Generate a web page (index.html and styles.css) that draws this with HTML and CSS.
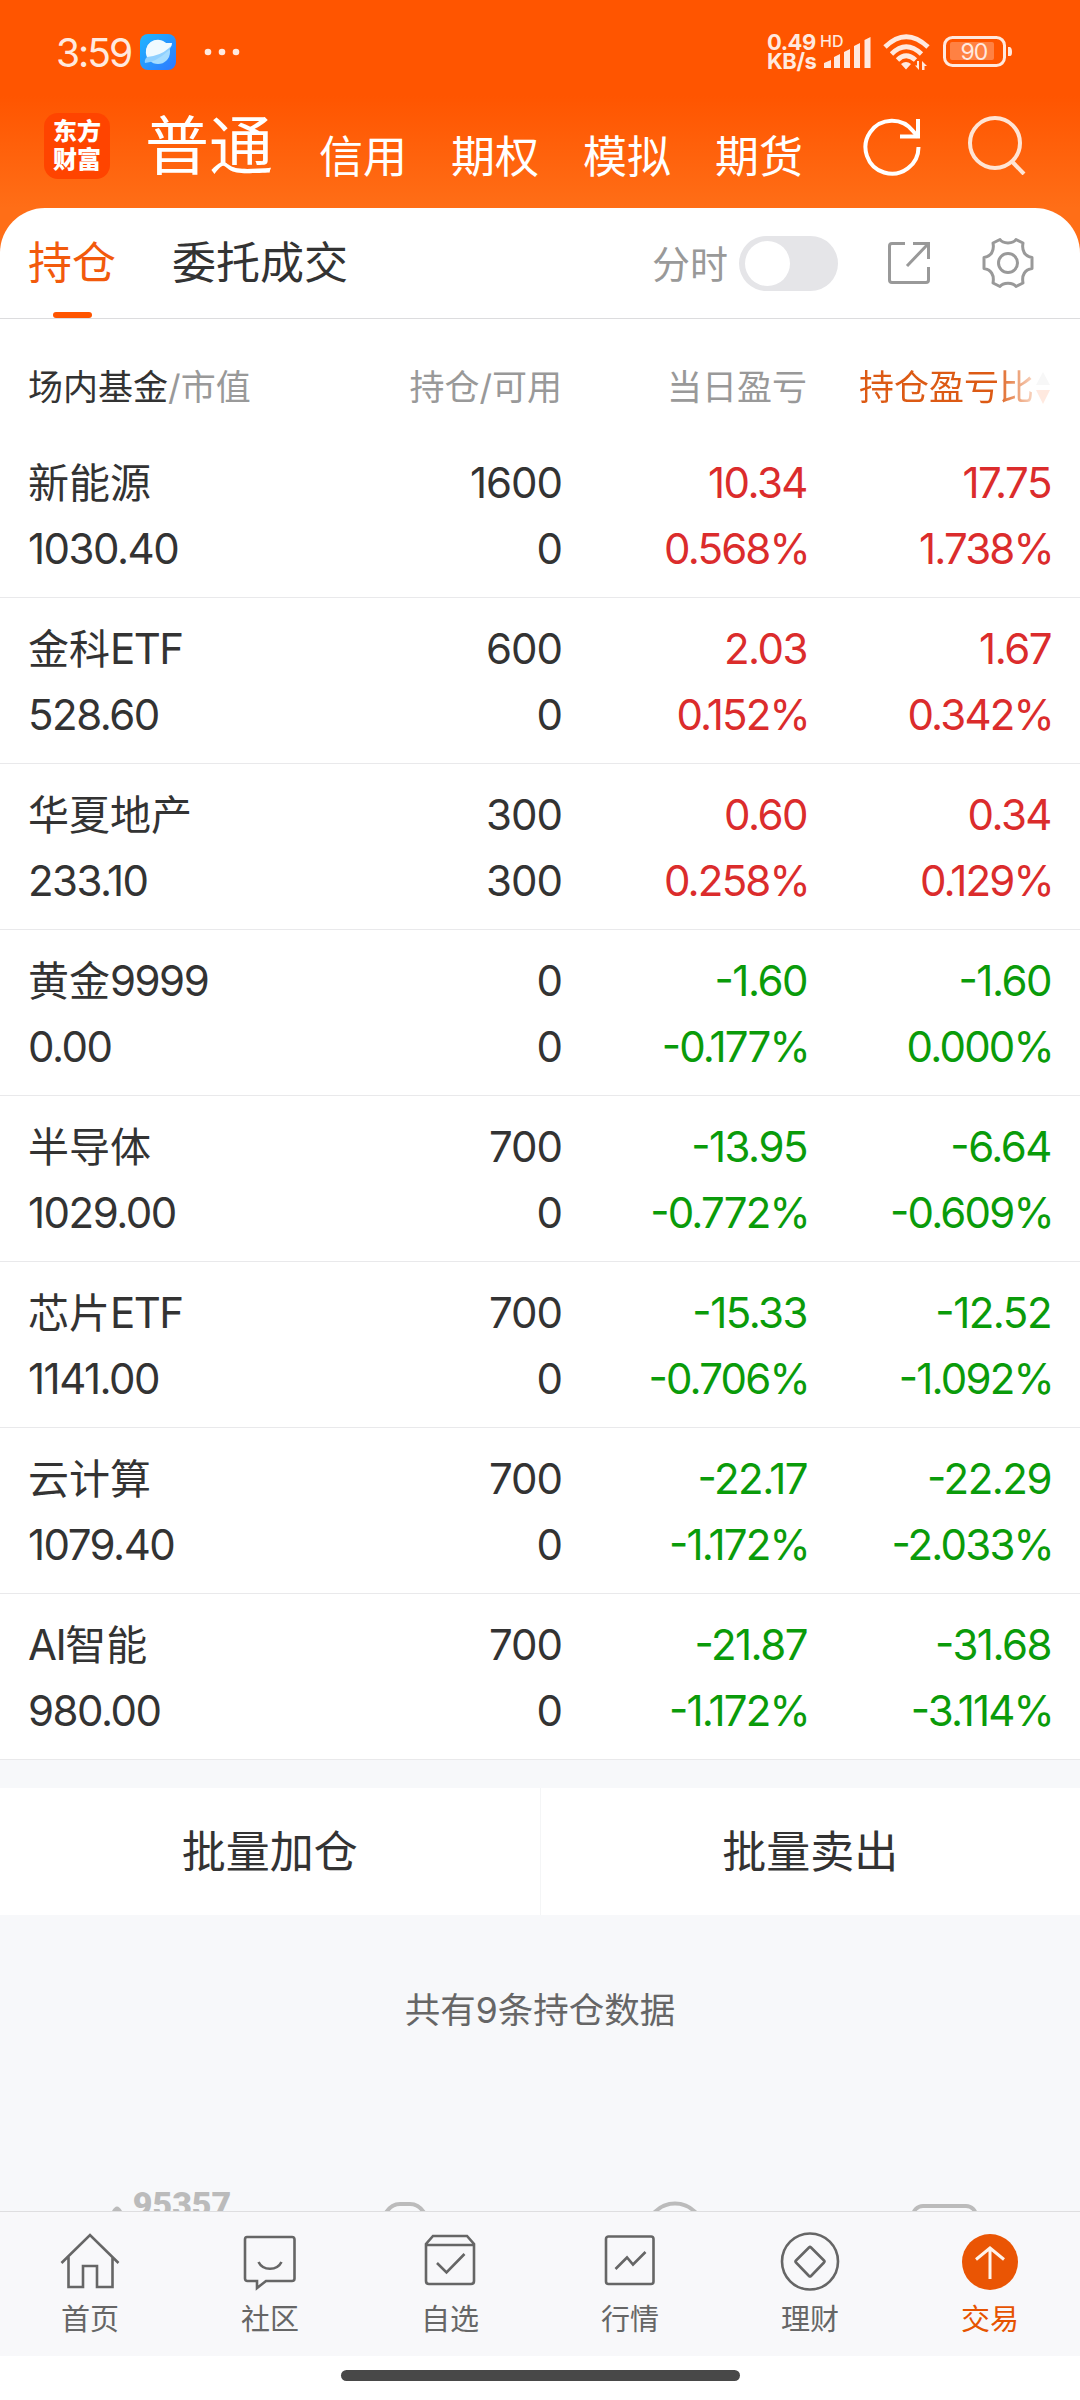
FILE: index.html
```html
<!DOCTYPE html>
<html lang="zh-CN">
<head>
    <meta charset="UTF-8">
    <meta name="viewport" content="width=device-width, initial-scale=1.0">
    <title>持仓</title>
    <link rel="stylesheet" href="styles.css">
</head>
<body>
    <div class="top">
        <div class="status-bar">
            <span class="time">3:59</span>
            <svg class="app-icon" width="36" height="36" viewBox="0 0 36 36">
                <defs>
                    <linearGradient id="sky" x1="0" y1="0" x2="1" y2="1">
                        <stop offset="0" stop-color="#1fb6ff"/>
                        <stop offset="1" stop-color="#2f78ff"/>
                    </linearGradient>
                </defs>
                <rect width="36" height="36" rx="8" fill="url(#sky)"/>
                <circle cx="18" cy="18" r="12" fill="#a5dcff"/>
                <path d="M5 29Q4 26 7 23L29 10l3-1Q32 13 28 17Q16 28 5 29z" fill="#8fd0ff"/>
                <path d="M7 23A12 12 0 0 1 26 9L32 9Q32 12 29 14Q20 22 7 23z" fill="#f0faff"/>
            </svg>
            <svg class="dots" width="36" height="8" viewBox="0 0 36 8">
                <circle cx="4" cy="4" r="3.300"/><circle cx="18" cy="4" r="3.300"/><circle cx="32" cy="4" r="3.300"/>
            </svg>
            <div class="speed"><span>0.49</span><span>KB/s</span></div>
            <svg class="signal" width="52" height="36" viewBox="0 0 52 36">
                <text x="-1" y="13" class="hd">HD</text>
                <path d="M3 34V29l7-3v8zM13 34V23l6-3v14zM23 34V18l6-3v19zM33 34V12l6-3v25zM43.500 34V6l6-3v31z"/>
            </svg>
            <svg class="wifi" width="48" height="38" viewBox="0 0 48 38">
                <g fill="none" stroke="#ffe9df" stroke-width="4.800">
                    <path d="M2 14Q23-6.500 45 14"/>
                    <path d="M8.500 21Q23 6.500 38.500 21"/>
                    <path d="M14.500 27Q23 18.500 32.500 27"/>
                </g>
                <path d="M18 31q5-4 10 0l-5 5.500zM36 28v9l-4-4.500h2V28zM39 37v-9l5 5h-2.500v4z"/>
            </svg>
            <svg class="battery" width="72" height="32" viewBox="0 0 72 32">
                <rect x="1.500" y="1.500" width="60" height="28" rx="8" fill="none" stroke="#ffe9df" stroke-width="3"/>
                <rect x="7" y="6" width="44" height="18" rx="2" fill="#ff8143"/>
                <path d="M65 11h2q2 1 2 5t-2 4h-2z"/>
                <text x="31" y="24" text-anchor="middle" class="percent">90</text>
            </svg>
        </div>
        <div class="header">
            <div class="logo">东方<br>财富</div>
            <div class="account-tabs">
                <span class="account-active">普通</span>
                <span>信用</span>
                <span>期权</span>
                <span>模拟</span>
                <span>期货</span>
            </div>
            <svg class="refresh" width="60" height="60" viewBox="0 0 60 60" fill="none" stroke="#fff" stroke-width="4">
                <path d="M56.500 31A26.500 26.500 0 1 1 51 15L56 21"/>
                <path d="M56 3v17.500H38"/>
            </svg>
            <svg class="search" width="60" height="60" viewBox="0 0 60 60" fill="none" stroke="#ffe4d4" stroke-width="4">
                <circle cx="28" cy="28" r="25"/>
                <path d="M44.500 46L57 59"/>
            </svg>
        </div>
        <div class="tabs">
            <span class="tab active">持仓</span>
            <span class="tab">委托成交</span>
            <span class="chart-label">分时</span>
            <span class="switch"></span>
            <svg class="share" width="44" height="44" viewBox="0 0 44 44" fill="none" stroke="#999" stroke-width="3">
                <path d="M18 2.500H5q-2.500 0-2.500 2.500v34q0 2.500 2.500 2.500h34q2.500 0 2.500-2.500V26"/>
                <path d="M26 2.500h15.500V18M41 3L20 25"/>
            </svg>
            <svg class="gear" width="52" height="52" viewBox="0 0 52 52" fill="none" stroke="#999" stroke-width="3">
                <path d="M18 2.500C21 7 31 7 34 2.500L41 6C39.500 14 43 19.500 50 20.500V31.500C43 32.500 39.500 38 41 46L34 49.500C31 45 21 45 18 49.500L11 46C12.500 38 9 32.500 2 31.500V20.500C9 19.500 12.500 14 11 6z" stroke-linejoin="round"/>
                <circle cx="26" cy="26" r="9.500"/>
            </svg>
        </div>
    </div>

    <div class="table">
        <div class="table-head">
            <div><span class="dark">场内基金</span>/市值</div>
            <div>持仓/可用</div>
            <div>当日盈亏</div>
            <div class="sorted">
                <span class="fade">持仓盈亏比</span>
                <svg width="16" height="34" viewBox="0 0 16 34"><path d="M8 1l7 13H1z" fill="#f7f7f7"/><path d="M1 19h14L8 33z" fill="#ffe9df"/></svg>
            </div>
        </div>
        <div class="row up">
            <div class="name">新能源<br><span class="num">1030.40</span></div>
            <div class="num qty">1600<br>0</div>
            <div class="num">10.34<br><span class="pct">0.568%</span></div>
            <div class="num">17.75<br><span class="pct">1.738%</span></div>
        </div>
        <div class="row up">
            <div class="name">金科<span class="num">ETF</span><br><span class="num">528.60</span></div>
            <div class="num qty">600<br>0</div>
            <div class="num">2.03<br><span class="pct">0.152%</span></div>
            <div class="num">1.67<br><span class="pct">0.342%</span></div>
        </div>
        <div class="row up">
            <div class="name">华夏地产<br><span class="num">233.10</span></div>
            <div class="num qty">300<br>300</div>
            <div class="num">0.60<br><span class="pct">0.258%</span></div>
            <div class="num">0.34<br><span class="pct">0.129%</span></div>
        </div>
        <div class="row down">
            <div class="name">黄金<span class="num">9999</span><br><span class="num">0.00</span></div>
            <div class="num qty">0<br>0</div>
            <div class="num">-1.60<br><span class="pct">-0.177%</span></div>
            <div class="num">-1.60<br><span class="pct">0.000%</span></div>
        </div>
        <div class="row down">
            <div class="name">半导体<br><span class="num">1029.00</span></div>
            <div class="num qty">700<br>0</div>
            <div class="num">-13.95<br><span class="pct">-0.772%</span></div>
            <div class="num">-6.64<br><span class="pct">-0.609%</span></div>
        </div>
        <div class="row down">
            <div class="name">芯片<span class="num">ETF</span><br><span class="num">1141.00</span></div>
            <div class="num qty">700<br>0</div>
            <div class="num">-15.33<br><span class="pct">-0.706%</span></div>
            <div class="num">-12.52<br><span class="pct">-1.092%</span></div>
        </div>
        <div class="row down">
            <div class="name">云计算<br><span class="num">1079.40</span></div>
            <div class="num qty">700<br>0</div>
            <div class="num">-22.17<br><span class="pct">-1.172%</span></div>
            <div class="num">-22.29<br><span class="pct">-2.033%</span></div>
        </div>
        <div class="row down">
            <div class="name"><span class="num">AI</span>智能<br><span class="num">980.00</span></div>
            <div class="num qty">700<br>0</div>
            <div class="num">-21.87<br><span class="pct">-1.172%</span></div>
            <div class="num">-31.68<br><span class="pct">-3.114%</span></div>
        </div>
    </div>

    <div class="batch">
        <div class="batch-btn">批量加仓</div>
        <div class="batch-btn">批量卖出</div>
    </div>

    <div class="summary">共有9条持仓数据</div>

    <!-- service links, cut off by the bottom nav -->
    <div class="services">
        <div class="service hotline">
            <svg width="12" height="6" viewBox="0 0 12 6"><path d="M1 6Q6-3 11 6z" fill="#bbb"/></svg>
            <span>95357</span>
        </div>
        <div class="service"><svg width="50" height="50" viewBox="0 0 50 50"><path d="M4 16Q10 4 20 4h10Q40 4 46 16"/></svg></div>
        <div class="service"><svg width="60" height="60" viewBox="0 0 60 60"><circle cx="30" cy="31.500" r="28"/></svg></div>
        <div class="service"><svg width="68" height="50" viewBox="0 0 68 50"><rect x="2" y="6" width="63" height="50" rx="10"/></svg></div>
    </div>

    <div class="nav">
        <div class="nav-item">
            <svg viewBox="0 0 60 60"><path d="M1.500 31L30 3l28.500 28M8.500 25v30H23V34h14v21h15.500V25"/></svg>
            首页
        </div>
        <div class="nav-item">
            <svg viewBox="0 0 60 60"><path d="M7 5h45q2.500 0 2.500 2.500v39q0 2.500-2.500 2.500H26l-9 7v-7H7.500Q5 49 5 46.500v-39Q5 5 7 5z"/><path d="M18.500 30C23 39 37 39 41.500 30"/></svg>
            社区
        </div>
        <div class="nav-item">
            <svg viewBox="0 0 60 60"><path d="M6 12v37q0 3 3 3h42q3 0 3-3V12l-7-8H13zM6 13h48M17 31l9.500 9.500L44.500 22"/></svg>
            自选
        </div>
        <div class="nav-item">
            <svg viewBox="0 0 60 60"><rect x="6" y="4.500" width="47.500" height="47.500" rx="2.500"/><path d="M15.500 37L27 25.500l6 7L45.500 20"/></svg>
            行情
        </div>
        <div class="nav-item">
            <svg viewBox="0 0 60 60"><circle cx="30" cy="29.500" r="28"/><path d="M29 15.500L16 28.500q-1 1 0 2L29 44q1 1 2 0L44 30.500q1-1 0-2L31 15.500q-1-1-2 0z"/></svg>
            理财
        </div>
        <div class="nav-item current">
            <svg viewBox="0 0 60 60"><circle cx="30" cy="30" r="28" class="disc"/><path d="M30 47V16M16 27.500L30 16l14 11.500" class="arrow"/></svg>
            交易
        </div>
    </div>
    <div class="home-bar"></div>
</body>
</html>
```
FILE: styles.css
```css
* {
    box-sizing: border-box;
}

body {
    margin: 0;
    width: 1080px;
    height: 2400px;
    overflow: hidden;
    display: flex;
    flex-direction: column;
    background: #f7f8fa;
    color: #333;
    font-family: Inter, "Noto Sans CJK SC", sans-serif;
}

svg {
    display: block;
    flex: none;
}

/* orange top area */
.top {
    background: linear-gradient(#ff5500 0, #ff5500 96px, #ff6e17 208px);
}

.status-bar {
    height: 100px;
    padding: 4px 65px 0 56px;
    display: flex;
    align-items: center;
    fill: #ffe9df;
    color: #ffe9df;
}

.time {
    width: 84px;
    font-size: 39px;
    letter-spacing: -2px;
    white-space: nowrap;
}

.dots {
    margin-left: 28px;
}

.speed {
    margin-left: auto;
    display: flex;
    flex-direction: column;
    font-size: 22px;
    line-height: 19px;
    font-weight: 700;
    letter-spacing: -0.5px;
    width: 54px;
}

.signal {
    overflow: visible;
}

.hd {
    font-size: 16px;
    font-weight: 500;
}

.wifi {
    margin: 0 12px 0 10px;
}

.percent {
    font-size: 23px;
    letter-spacing: -1px;
}

.header {
    height: 108px;
    padding: 0 53px 0 44px;
    display: flex;
    color: #fff;
}

.logo {
    width: 66px;
    height: 66px;
    margin-top: 13px;
    padding-top: 5px;
    border-radius: 14px;
    background: #ff4400;
    font-size: 24px;
    line-height: 28px;
    font-weight: 900;
    text-align: center;
}

.account-tabs {
    display: flex;
    align-items: flex-start;
    gap: 44px;
    margin-left: 35px;
    font-size: 44px;
    line-height: 114px;
}

.account-active {
    margin-right: 2px;
    font-size: 64px;
    line-height: 91px;
}

.refresh {
    margin: 16px 0 0 auto;
}

.search {
    margin: 15px 0 0 45px;
}

.tabs {
    height: 111px;
    padding: 0 46px 0 28px;
    display: flex;
    align-items: center;
    background: #fff;
    border-bottom: 1px solid #dcdcde;
    border-radius: 45px 45px 0 0;
    font-size: 44px;
}

.tab {
    position: relative;
    height: 110px;
    line-height: 110px;
    margin-right: 56px;
}

.active {
    color: #f25a0c;
}

.active::after {
    content: "";
    position: absolute;
    left: 25px;
    bottom: 0;
    width: 39px;
    height: 6px;
    border-radius: 3px;
    background: #ff5500;
}

.chart-label {
    margin-left: auto;
    margin-right: 11px;
    margin-top: -3px;
    font-size: 38px;
    color: #999;
}

.switch {
    width: 99px;
    height: 55px;
    padding: 5px 6px;
    border-radius: 28px;
    background: #e5e5e8;
}

.switch::before {
    content: "";
    display: block;
    width: 45px;
    height: 45px;
    border-radius: 50%;
    background: #fff;
}

.share {
    margin: 0 51px 0 49px;
}

/* holdings */
.table {
    background: #fff;
}

.table-head,
.row {
    display: grid;
    grid-template-columns: 291px 243px 245px 244px;
    padding: 0 29px 0 28px;
    text-align: right;
}

.table-head {
    height: 113px;
    line-height: 137px;
    font-size: 35px;
    color: #999;
    white-space: nowrap;
}

.table-head > :first-child,
.name {
    text-align: left;
}

.dark {
    color: #333;
}

.sorted {
    display: flex;
    justify-content: flex-end;
    align-items: center;
    gap: 1px;
    height: 137px;
}

.fade {
    color: transparent;
    background: linear-gradient(90deg, #dc5a14 78%, #f9d8c5);
    -webkit-background-clip: text;
    background-clip: text;
}

.row {
    height: 166px;
    padding-top: 18px;
    border-bottom: 1px solid #e9e9eb;
    line-height: 66px;
    font-size: 41px;
}

.num {
    font-size: 42px;
    letter-spacing: -1.5px;
    font-feature-settings: "case";
}

.qty {
    letter-spacing: -1px;
}

.pct {
    margin-right: -2px;
    letter-spacing: -1.8px;
}

.up {
    color: #db2c2c;
}

.down {
    color: #0a9b0a;
}

.row .name,
.row .qty {
    color: #333;
}

.batch {
    display: flex;
    height: 127px;
    margin-top: 28px;
    background: #fff;
}

.batch-btn {
    flex: 1;
    line-height: 128px;
    text-align: center;
    font-size: 44px;
}

.batch-btn + .batch-btn {
    border-left: 1px solid #f4f5f6;
}

.summary {
    margin-top: 66px;
    line-height: 60px;
    font-size: 35.5px;
    text-align: center;
    color: #666;
}

.services {
    height: 24px;
    margin-top: auto;
    display: grid;
    grid-template-columns: repeat(4, 1fr);
    overflow: hidden;
}

.service {
    display: flex;
    justify-content: center;
    padding-top: 13px;
    fill: none;
    stroke: #bbb;
    stroke-width: 4px;
}

.hotline {
    padding: 0 0 0 72px;
    align-items: flex-start;
    gap: 10px;
    stroke: none;
    font-family: Roboto, sans-serif;
    font-size: 34px;
    font-weight: 900;
    line-height: 34px;
    color: #bbb;
}

.hotline svg {
    margin-top: 18px;
}

.nav {
    height: 145px;
    display: grid;
    grid-template-columns: repeat(6, 1fr);
    background: #f8f8fa;
    border-top: 1px solid #dedee0;
    flex: none;
}

.nav-item {
    display: flex;
    flex-direction: column;
    align-items: center;
    padding-top: 20px;
    font-size: 29px;
    line-height: 55px;
    color: #666;
}

.nav-item svg {
    width: 60px;
    height: 60px;
    fill: none;
    stroke: #666;
    stroke-width: 2.6px;
}

.nav-item.current {
    color: #e65300;
}

.nav-item .disc {
    fill: #ea5504;
    stroke: none;
}

.nav-item .arrow {
    stroke: #fff3ea;
    stroke-width: 3px;
}

.home-bar {
    display: flow-root;
    flex: none;
    height: 44px;
    background: #fff;
}

.home-bar::before {
    content: "";
    display: block;
    width: 399px;
    height: 11px;
    margin: 14px auto 0;
    border-radius: 6px;
    background: #484848;
}
```
